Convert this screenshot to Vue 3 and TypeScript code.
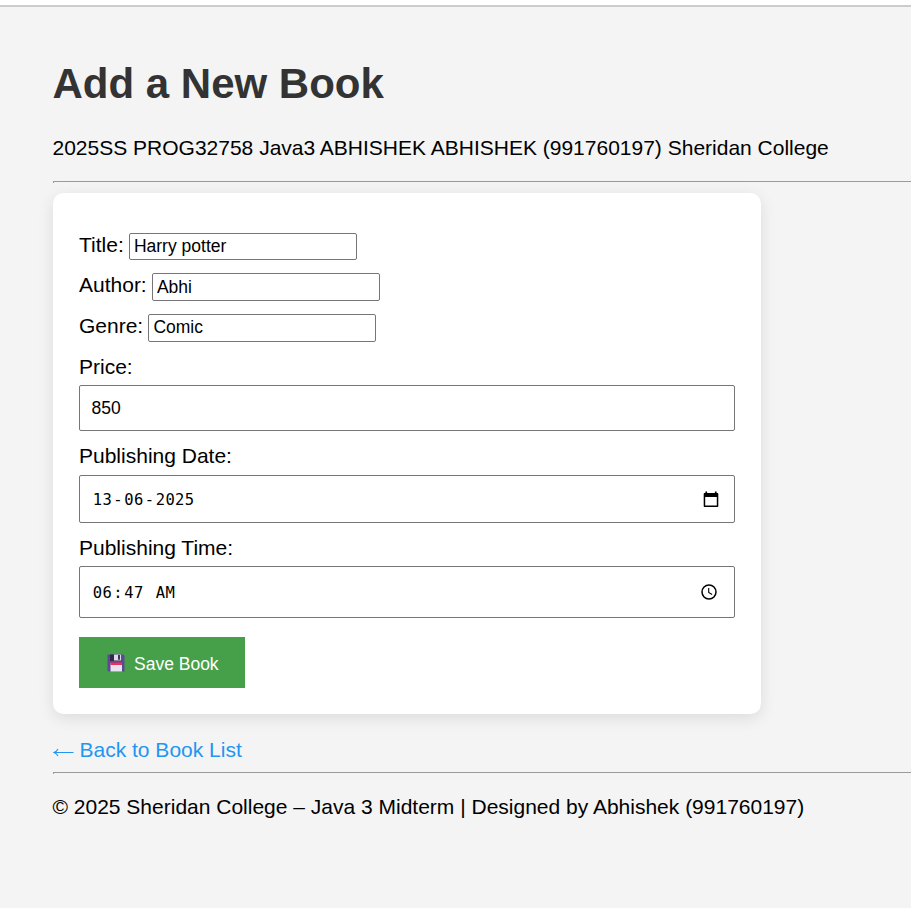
<script setup lang="ts">
import { ref } from 'vue'

interface TextField {
  id: string
  label: string
  value: string
}

const fields = ref<TextField[]>([
  { id: 'title', label: 'Title:', value: 'Harry potter' },
  { id: 'author', label: 'Author:', value: 'Abhi' },
  { id: 'genre', label: 'Genre:', value: 'Comic' },
])
const price = ref('850')
const dateParts: string[] = ['13', '-', '06', '-', '2025']
const timeParts: string[] = ['06', ':', '47', ' ', 'AM']

const isSeparator = (part: string): boolean => part.length === 1
</script>

<template>
  <div class="page">
    <h1>Add a New Book</h1>
    <p class="intro">2025SS PROG32758 Java3 ABHISHEK ABHISHEK (991760197) Sheridan College</p>
    <hr />
    <form class="card" @submit.prevent>
      <div v-for="field in fields" :key="field.id" class="row">
        <label :for="field.id">{{ field.label }}</label>
        <input :id="field.id" v-model="field.value" class="short" type="text" spellcheck="false" />
      </div>

      <label class="block-label" for="price">Price:</label>
      <input id="price" v-model="price" class="box price" type="text" />

      <label class="block-label date-label">Publishing Date:</label>
      <div class="box picker date">
        <div class="parts">
          <span v-for="(part, i) in dateParts" :key="i" :class="isSeparator(part) ? 'sep' : 'part'">{{ part }}</span>
        </div>
        <svg class="calendar" viewBox="0 0 16 17" width="16" height="17">
          <path fill="#000" fill-rule="evenodd" d="M2.4 0.5h1.7v1.5h7.8V0.5h1.7v1.5h0.6c.7 0 1.1.5 1.1 1.1v11.8c0 .7-.5 1.1-1.1 1.1H1.8c-.7 0-1.1-.5-1.1-1.1V3.1C.7 2.5 1.1 2 1.8 2h.6zM2.2 6v8.600h11.600V6z" />
        </svg>
      </div>

      <label class="block-label time-label">Publishing Time:</label>
      <div class="box picker time">
        <div class="parts">
          <span v-for="(part, i) in timeParts" :key="i" :class="isSeparator(part) ? 'sep' : 'part'">{{ part }}</span>
        </div>
        <svg class="clock" viewBox="0 0 16 16" width="16" height="16" fill="none" stroke="#000">
          <circle cx="8" cy="8" r="7" stroke-width="1.5" />
          <path d="M7.7 4v4.400l3.400 2.100" stroke-width="1.1" />
        </svg>
      </div>

      <button class="save" type="submit">
        <svg class="disk" viewBox="0 0 18 18" width="18" height="18">
          <path fill="#594b91" d="M.5.5h15.500L17.500 2v15.500H1.500l-1-1z" />
          <path fill="#30264f" d="M3 .5h11v6.500H3z" />
          <path fill="#ded9e8" d="M7 .5h7v6H7z" />
          <path fill="#40345f" d="M11 1h2v4.700h-2z" />
          <path fill="#e9e2f1" d="M3.500 9h11.500v8.500H3.500z" />
          <path fill="#ed2f59" d="M3.500 8.500h11.500v2.500H3.500z" />
        </svg>
        <span>Save Book</span>
      </button>
    </form>

    <a class="back" href="#">
      <svg viewBox="0 0 21 12" width="21" height="12" fill="none" stroke="#2196f3" stroke-width="1.1">
        <path d="M20.500 6.500H1.200M5 3Q3.800 5.500 1 6.500Q3.800 7.500 5 10" />
      </svg>
      <span>Back to Book List</span>
    </a>
    <hr />
    <p class="footer">© 2025 Sheridan College – Java 3 Midterm | Designed by Abhishek (991760197)</p>
  </div>
</template>

<style>
body {
  background: #f4f4f4;
  overflow: hidden;
}
</style>

<style scoped>
.page {
  box-sizing: border-box;
  height: 903px;
  padding: 53px 0 0 52.5px;
  border-top: 2px solid #ccc;
  box-shadow: 0 -5px #fff;
  margin-top: 5px;
  background: #f4f4f4;
  font: 21px/24px "Liberation Sans", Arial, sans-serif;
  color: #000;
}
h1 {
  margin: 0 0 28px;
  font-size: 42px;
  line-height: 48px;
  color: #333;
}
p {
  margin: 0;
  white-space: nowrap;
}
hr {
  height: 1px;
  margin: 0;
  border: solid #9a9a9a;
  border-width: 1px 0 0 1px;
}
.intro {
  margin-bottom: 21px;
}
.card {
  box-sizing: border-box;
  display: flex;
  flex-direction: column;
  width: 708.5px;
  height: 521px;
  margin-top: 10px;
  padding: 39.7px 26px 0 26.5px;
  border-radius: 10.5px;
  background: #fff;
  box-shadow: 0 4px 16px rgba(0, 0, 0, 0.1);
}
.row {
  display: flex;
  gap: 5.2px;
  height: 27.5px;
  margin-bottom: 13.2px;
}
.row:nth-child(3) {
  margin-bottom: 13.5px;
}
input {
  box-sizing: border-box;
  margin: 0;
  font: 17.5px "Liberation Sans", Arial, sans-serif;
  color: #000;
  background: #fff;
  border: 1px solid #767676;
  border-radius: 2px;
  outline: none;
}
.short {
  width: 227.7px;
  height: 27.5px;
  padding: 0 4px;
}
.block-label {
  display: block;
  height: 24px;
}
.box {
  box-sizing: border-box;
  width: 656px;
  border: 1px solid #767676;
  border-radius: 2px;
}
.price {
  height: 46px;
  margin-top: 6px;
  padding: 0 11.5px;
}
.date-label,
.time-label {
  margin-top: 13px;
}
.picker {
  display: flex;
  align-items: center;
  justify-content: space-between;
  padding: 0 15px 0 11.5px;
}
.date {
  height: 48px;
  margin-top: 7px;
}
.time {
  height: 52px;
  margin-top: 6px;
  padding-right: 17px;
}
.parts {
  display: flex;
  padding-top: 2px;
  font: 15.5px/20px "DejaVu Sans Mono", monospace;
  letter-spacing: 0.3px;
  white-space: pre;
}
.part {
  padding: 0 1.3px;
}
.save {
  display: flex;
  align-items: center;
  gap: 8.6px;
  width: 166px;
  height: 51px;
  margin-top: 19px;
  padding: 3px 0 0 28.4px;
  border: 0;
  background: #46a049;
  color: #fff;
  font: 17.5px "Liberation Sans", Arial, sans-serif;
}
.disk {
  flex: none;
  margin-top: -2px;
}
.back {
  display: flex;
  align-items: center;
  gap: 6px;
  width: max-content;
  height: 24px;
  margin: 24px 0 10px;
  color: #2196f3;
  text-decoration: none;
}
.back svg {
  margin-top: 3px;
}
.footer {
  margin-top: 21px;
}
</style>
